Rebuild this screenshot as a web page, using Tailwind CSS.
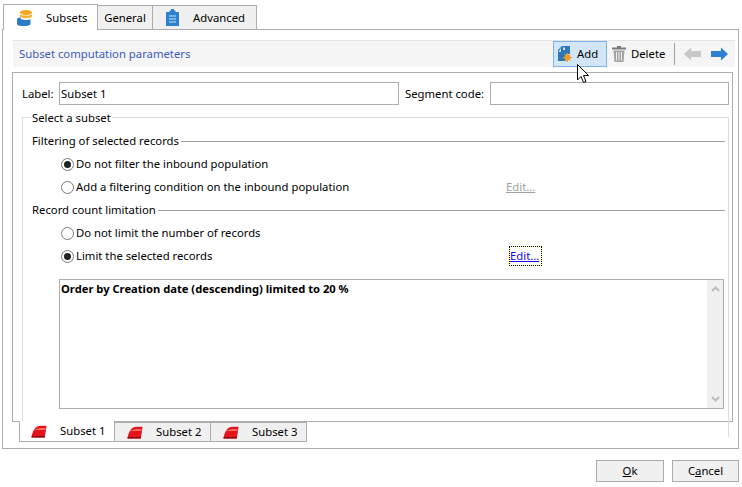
<!DOCTYPE html>
<html lang="en">
<head>
  <meta charset="UTF-8" />
  <title>Subsets</title>
  <script src="https://cdn.jsdelivr.net/npm/@tailwindcss/browser@4"></script>
</head>
<body class="bg-white">
<div class="relative w-[742px] h-[487px] overflow-hidden bg-white text-[11.3px] leading-[16px] text-black font-['Noto_Sans',sans-serif]">

  <!-- top tabs -->
  <div class="relative z-10 flex h-[30px] pt-[4px] pl-[3px] items-end">
    <div class="w-[95px] h-[26px] bg-white border border-b-0 border-[#adadad] flex items-center pl-[12px]">
      <svg width="18" height="18" viewBox="0 0 18 18">
        <path d="M1 10.500C1 9 3 8.500 4.500 8.200V9.500C6 11 11 11.500 13 10.500H14.500V15C14.500 16.500 11 17 7.500 17C4 17 1 16.500 1 15Z" fill="#2b7cc9"/>
        <ellipse cx="10" cy="3.500" rx="6" ry="2.500" fill="#f5a623"/>
        <path d="M4 5C5 7 15 7 16 5V7.500C15 9.800 5 9.800 4 7.500Z" fill="#f0b232"/>
      </svg>
      <span class="ml-[12px]">Subsets</span>
    </div>
    <div class="w-[55px] h-[25px] bg-[#f0f0f0] border border-l-0 border-[#adadad] flex items-center justify-center">General</div>
    <div class="w-[104px] h-[25px] bg-[#f0f0f0] border border-l-0 border-[#adadad] flex items-center pl-[13px]">
      <svg width="13" height="17" viewBox="0 0 13 17">
        <path d="M0 3H3.500V1.500H5V0H8V1.500H9.500V3H13V17H0Z" fill="#2b82d0"/>
        <path d="M3 7H10M3 10H10M3 13H10" stroke="#cfe4f7" stroke-width="1"/>
      </svg>
      <span class="ml-[14px]">Advanced</span>
    </div>
  </div>

  <!-- main panel -->
  <div class="ml-[2px] mt-[-1px] w-[737px] h-[420px] border border-[#adadad] flex flex-col">
    <div class="mt-[10px] ml-[10px] w-[722px] h-[27px] bg-[#f5f5f5] border-t border-[#e3e3e3] flex items-center">
      <span class="ml-[6px] text-[#3b5bbf]">Subset computation parameters</span>
      <div class="ml-auto flex items-center h-[26px]">
        <div class="w-[54px] h-[26px] bg-[#d3e6f7] border border-[#7cb4e8] flex items-center pl-[4px]">
          <svg width="14" height="16" viewBox="0 0 14 16">
            <path d="M4 0H12V8H8V15H0V4Z" fill="#2f78b8"/>
            <path d="M3 2V6H0.500Z" fill="#d3e6f7"/>
            <path d="M5 1.500H7V4H5Z" fill="#d3e6f7"/>
            <circle cx="9.500" cy="11.500" r="3" fill="#f59a1e"/>
            <path d="M9.500 7V16M5 11.500H14M6.300 8.300L12.700 14.700M12.700 8.300L6.300 14.700" stroke="#f59a1e" stroke-width="1"/>
          </svg>
          <span class="ml-[5px]">Add</span>
        </div>
        <div class="w-[66px] flex items-center pl-[5px]">
          <svg width="14" height="16" viewBox="0 0 14 16">
            <path d="M5 0H9V1.500H14V3.500H0V1.500H5Z" fill="#7a7a7a"/>
            <path d="M1.500 4.500H12.500L11.500 16H2.500Z" fill="#a3a3a3"/>
            <path d="M4.500 6V14.500M7 6V14.500M9.500 6V14.500" stroke="#efefef" stroke-width="1"/>
          </svg>
          <span class="ml-[5px]">Delete</span>
        </div>
        <div class="w-px h-[22px] bg-[#a0a0a0] ml-[1px]"></div>
        <svg class="ml-[9px]" width="17" height="14" viewBox="0 0 17 14"><path d="M0 7L7 0.500V4H17V10H7V13.500Z" fill="#c8c8c8"/></svg>
        <svg class="ml-[10px] mr-[7px]" width="17" height="14" viewBox="0 0 17 14"><path d="M17 7L10 0.500V4H0V10H10V13.500Z" fill="#2b7fd4"/></svg>
      </div>
    </div>

    <!-- inner panel -->
    <div class="mt-[5px] ml-[9px] w-[721px] h-[350px] border border-[#adadad] pl-[9px] pr-[2px] pt-[9px]">
      <div class="flex items-center h-[23px]">
        <span class="w-[37px] shrink-0">Label:</span>
        <div class="w-[340px] shrink-0 h-[23px] border border-[#adadad] flex items-center pl-[1px]">Subset 1</div>
        <span class="ml-[6px] w-[85px] shrink-0">Segment code:</span>
        <div class="w-[239px] shrink-0 h-[23px] border border-[#adadad]"></div>
      </div>

      <!-- fieldset -->
      <div class="relative mt-[12px] w-[707px] h-[320px] border border-b-0 border-[#dcdcdc] pl-[9px] pr-[3px] pt-[15px]">
        <span class="absolute left-[8px] top-[-8px] bg-white px-[1px]">Select a subset</span>

        <div class="flex items-center h-[16px]">
          <span>Filtering of selected records</span>
          <div class="flex-1 h-px bg-[#a0a0a0] ml-[2px]"></div>
        </div>
        <div class="flex items-center h-[16px] mt-[7px] ml-[29px]">
          <div class="w-[13px] h-[13px] rounded-full border border-[#7a7a7a] flex items-center justify-center"><div class="w-[7px] h-[7px] rounded-full bg-[#222]"></div></div>
          <span class="ml-[2px]">Do not filter the inbound population</span>
        </div>
        <div class="flex items-center h-[16px] mt-[7px] ml-[29px]">
          <div class="w-[13px] h-[13px] rounded-full border border-[#7a7a7a]"></div>
          <span class="ml-[2px] w-[430px]">Add a filtering condition on the inbound population</span>
          <span class="text-[#a0a0a0] underline">Edit...</span>
        </div>
        <div class="flex items-center h-[16px] mt-[7px]">
          <span>Record count limitation</span>
          <div class="flex-1 h-px bg-[#a0a0a0] ml-[2px]"></div>
        </div>
        <div class="flex items-center h-[16px] mt-[7px] ml-[29px]">
          <div class="w-[13px] h-[13px] rounded-full border border-[#7a7a7a]"></div>
          <span class="ml-[2px]">Do not limit the number of records</span>
        </div>
        <div class="flex items-center h-[16px] mt-[7px] ml-[29px]">
          <div class="w-[13px] h-[13px] rounded-full border border-[#7a7a7a] flex items-center justify-center"><div class="w-[7px] h-[7px] rounded-full bg-[#222]"></div></div>
          <span class="ml-[2px] w-[433px]">Limit the selected records</span>
          <span class="w-[33px] h-[20px] border border-dotted border-black bg-[#fdfd9a] text-[#1a00ff] underline leading-[17px]"><span class="bg-white block h-full">Edit...</span></span>
        </div>

        <div class="mt-[15px] ml-[27px] w-[665px] h-[130px] border border-[#adadad] flex">
          <div class="flex-1 pl-[1px] pt-[1px] font-bold text-[11.2px]">Order by Creation date (descending) limited to 20 %</div>
          <div class="w-[16px] bg-[#f0f0f0] flex flex-col justify-between items-center py-[6px]">
            <svg width="9" height="6" viewBox="0 0 9 6"><path d="M1 5L4.500 1.500L8 5" fill="none" stroke="#bcbcbc" stroke-width="2"/></svg>
            <svg width="9" height="6" viewBox="0 0 9 6"><path d="M1 1L4.500 4.500L8 1" fill="none" stroke="#bcbcbc" stroke-width="2"/></svg>
          </div>
        </div>
      </div>
    </div>

    <!-- bottom tabs -->
    <div class="flex ml-[16px] mt-[-1px] relative items-start">
      <div class="w-[96px] h-[21px] bg-white border border-t-0 border-[#adadad] flex items-center pl-[11px]">
        <svg width="16" height="13" viewBox="0 0 16 13"><path d="M0.500 12.500C1 8 3 2 8 1C11 0.500 14 0.500 15.500 1C15 5 14.500 9 13.500 12.500Z" fill="#e3141c"/><path d="M3 6C5 3 8 3 14.500 3V5H3Z" fill="#ff6a6a"/><path d="M0.500 11H14V12.500H0.500Z" fill="#8e0c10"/></svg>
        <span class="ml-[13px]">Subset 1</span>
      </div>
      <div class="w-[96px] h-[20px] mt-[1px] bg-[#f0f0f0] border border-l-0 border-[#adadad] flex items-center pl-[12px]">
        <svg width="16" height="13" viewBox="0 0 16 13"><path d="M0.500 12.500C1 8 3 2 8 1C11 0.500 14 0.500 15.500 1C15 5 14.500 9 13.500 12.500Z" fill="#e3141c"/><path d="M3 6C5 3 8 3 14.500 3V5H3Z" fill="#ff6a6a"/><path d="M0.500 11H14V12.500H0.500Z" fill="#8e0c10"/></svg>
        <span class="ml-[13px]">Subset 2</span>
      </div>
      <div class="w-[96px] h-[20px] mt-[1px] bg-[#f0f0f0] border border-l-0 border-[#adadad] flex items-center pl-[12px]">
        <svg width="16" height="13" viewBox="0 0 16 13"><path d="M0.500 12.500C1 8 3 2 8 1C11 0.500 14 0.500 15.500 1C15 5 14.500 9 13.500 12.500Z" fill="#e3141c"/><path d="M3 6C5 3 8 3 14.500 3V5H3Z" fill="#ff6a6a"/><path d="M0.500 11H14V12.500H0.500Z" fill="#8e0c10"/></svg>
        <span class="ml-[13px]">Subset 3</span>
      </div>
    </div>
  </div>

  <!-- dialog buttons -->
  <div class="flex justify-end gap-[8px] mt-[11px] pr-[3px]">
    <div class="w-[68px] h-[22px] bg-[#f0f0f0] border border-[#adadad] flex items-center justify-center"><span><span class="underline">O</span>k</span></div>
    <div class="w-[67px] h-[22px] bg-[#f0f0f0] border border-[#adadad] flex items-center justify-center"><span>C<span class="underline">a</span>ncel</span></div>
  </div>

  <!-- mouse cursor -->
  <svg class="absolute left-[577px] top-[64px] z-20" width="13" height="20" viewBox="0 0 13 20">
    <path d="M0.500 0.500V16L4 12.500L6.500 18.500L9 17.500L6.500 11.500H11.500Z" fill="#fff" stroke="#000" stroke-width="1"/>
  </svg>
</div>
</body>
</html>
